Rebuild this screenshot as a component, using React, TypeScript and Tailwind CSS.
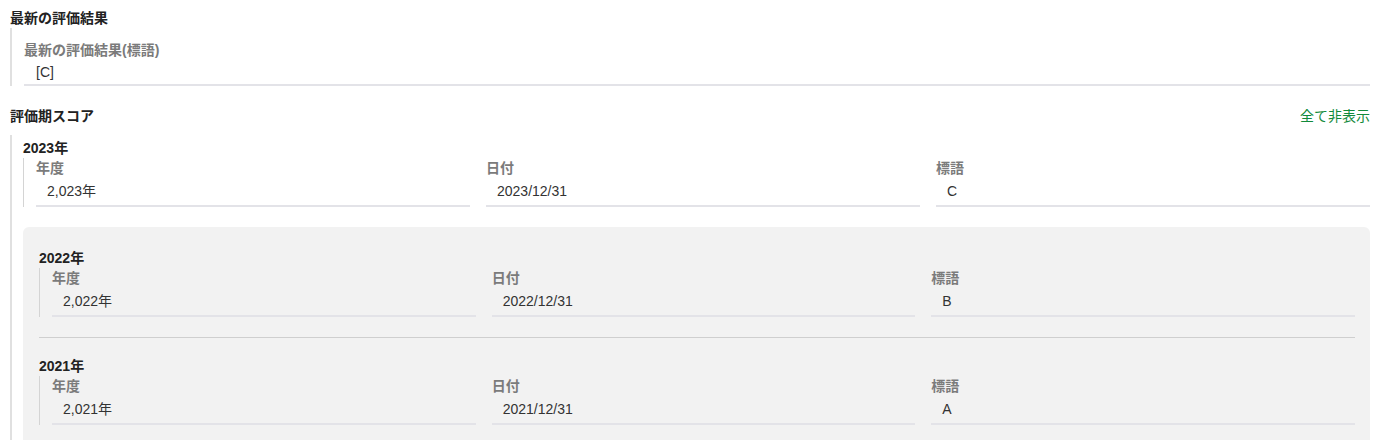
import React from "react";

interface IScore {
  year: string;
  nendo: string;
  date: string;
  grade: string;
}

const scores: IScore[] = [
  { year: "2023年", nendo: "2,023年", date: "2023/12/31", grade: "C" },
  { year: "2022年", nendo: "2,022年", date: "2022/12/31", grade: "B" },
  { year: "2021年", nendo: "2,021年", date: "2021/12/31", grade: "A" },
];

const font = { fontFamily: '"Liberation Sans", "Noto Sans CJK JP", sans-serif' };

const Field: React.FC<{ label: string; value: string }> = ({ label, value }) => {
  return (
    <div className="min-w-0">
      <p className="text-[14px] leading-4 font-bold text-[#7b7b7b]">{label}</p>
      <div className="mt-[7px] border-b-2 border-[#e3e3e8] pb-[6px] pl-[11px] text-[14px] leading-4 text-[#333]">
        {value}
      </div>
    </div>
  );
};

const ScoreItem: React.FC<{ score: IScore }> = ({ score }) => {
  return (
    <div>
      <p className="text-[14px] leading-4 font-bold text-[#222]">{score.year}</p>
      <div className="mt-[2px] border-l border-[#d4d4d4] pl-3 pt-[2px]">
        <div className="grid grid-cols-3 gap-4">
          <Field label="年度" value={score.nendo} />
          <Field label="日付" value={score.date} />
          <Field label="標語" value={score.grade} />
        </div>
      </div>
    </div>
  );
};

const App: React.FC = () => {
  const [first, ...rest] = scores;

  return (
    <div style={font} className="h-[440px] overflow-hidden bg-white px-[10px] pt-[10px]">
      {/* 最新の評価結果 */}
      <p className="text-[14px] leading-4 font-bold text-[#222]">最新の評価結果</p>
      <div className="mt-[2px] border-l-2 border-[#e0e0e0] pl-3 pt-[14px]">
        <p className="text-[14px] leading-4 font-bold text-[#7b7b7b]">最新の評価結果(標語)</p>
        <div className="mt-[6px] border-b-2 border-[#e3e3e8] pb-1 pl-3 text-[14px] leading-4 text-[#333]">
          [C]
        </div>
      </div>

      {/* 評価期スコア */}
      <div className="mt-[22px] flex items-center justify-between">
        <p className="text-[14px] leading-4 font-bold text-[#222]">評価期スコア</p>
        <p className="cursor-pointer text-[14px] leading-4 text-[#118a3b]">全て非表示</p>
      </div>

      <div className="mt-[11px] border-l-2 border-[#e0e0e0] pb-10 pl-[11px] pt-[5px]">
        <ScoreItem score={first} />

        <div className="mt-5 rounded-md bg-[#f2f2f2] pb-6 pl-4 pr-[15px] pt-[23px]">
          {rest.map((s, i) => (
            <div key={s.year}>
              {i > 0 && <div className="my-5 h-px bg-[#cfcfcf]" />}
              <ScoreItem score={s} />
            </div>
          ))}
        </div>
      </div>
    </div>
  );
};

export default App;
